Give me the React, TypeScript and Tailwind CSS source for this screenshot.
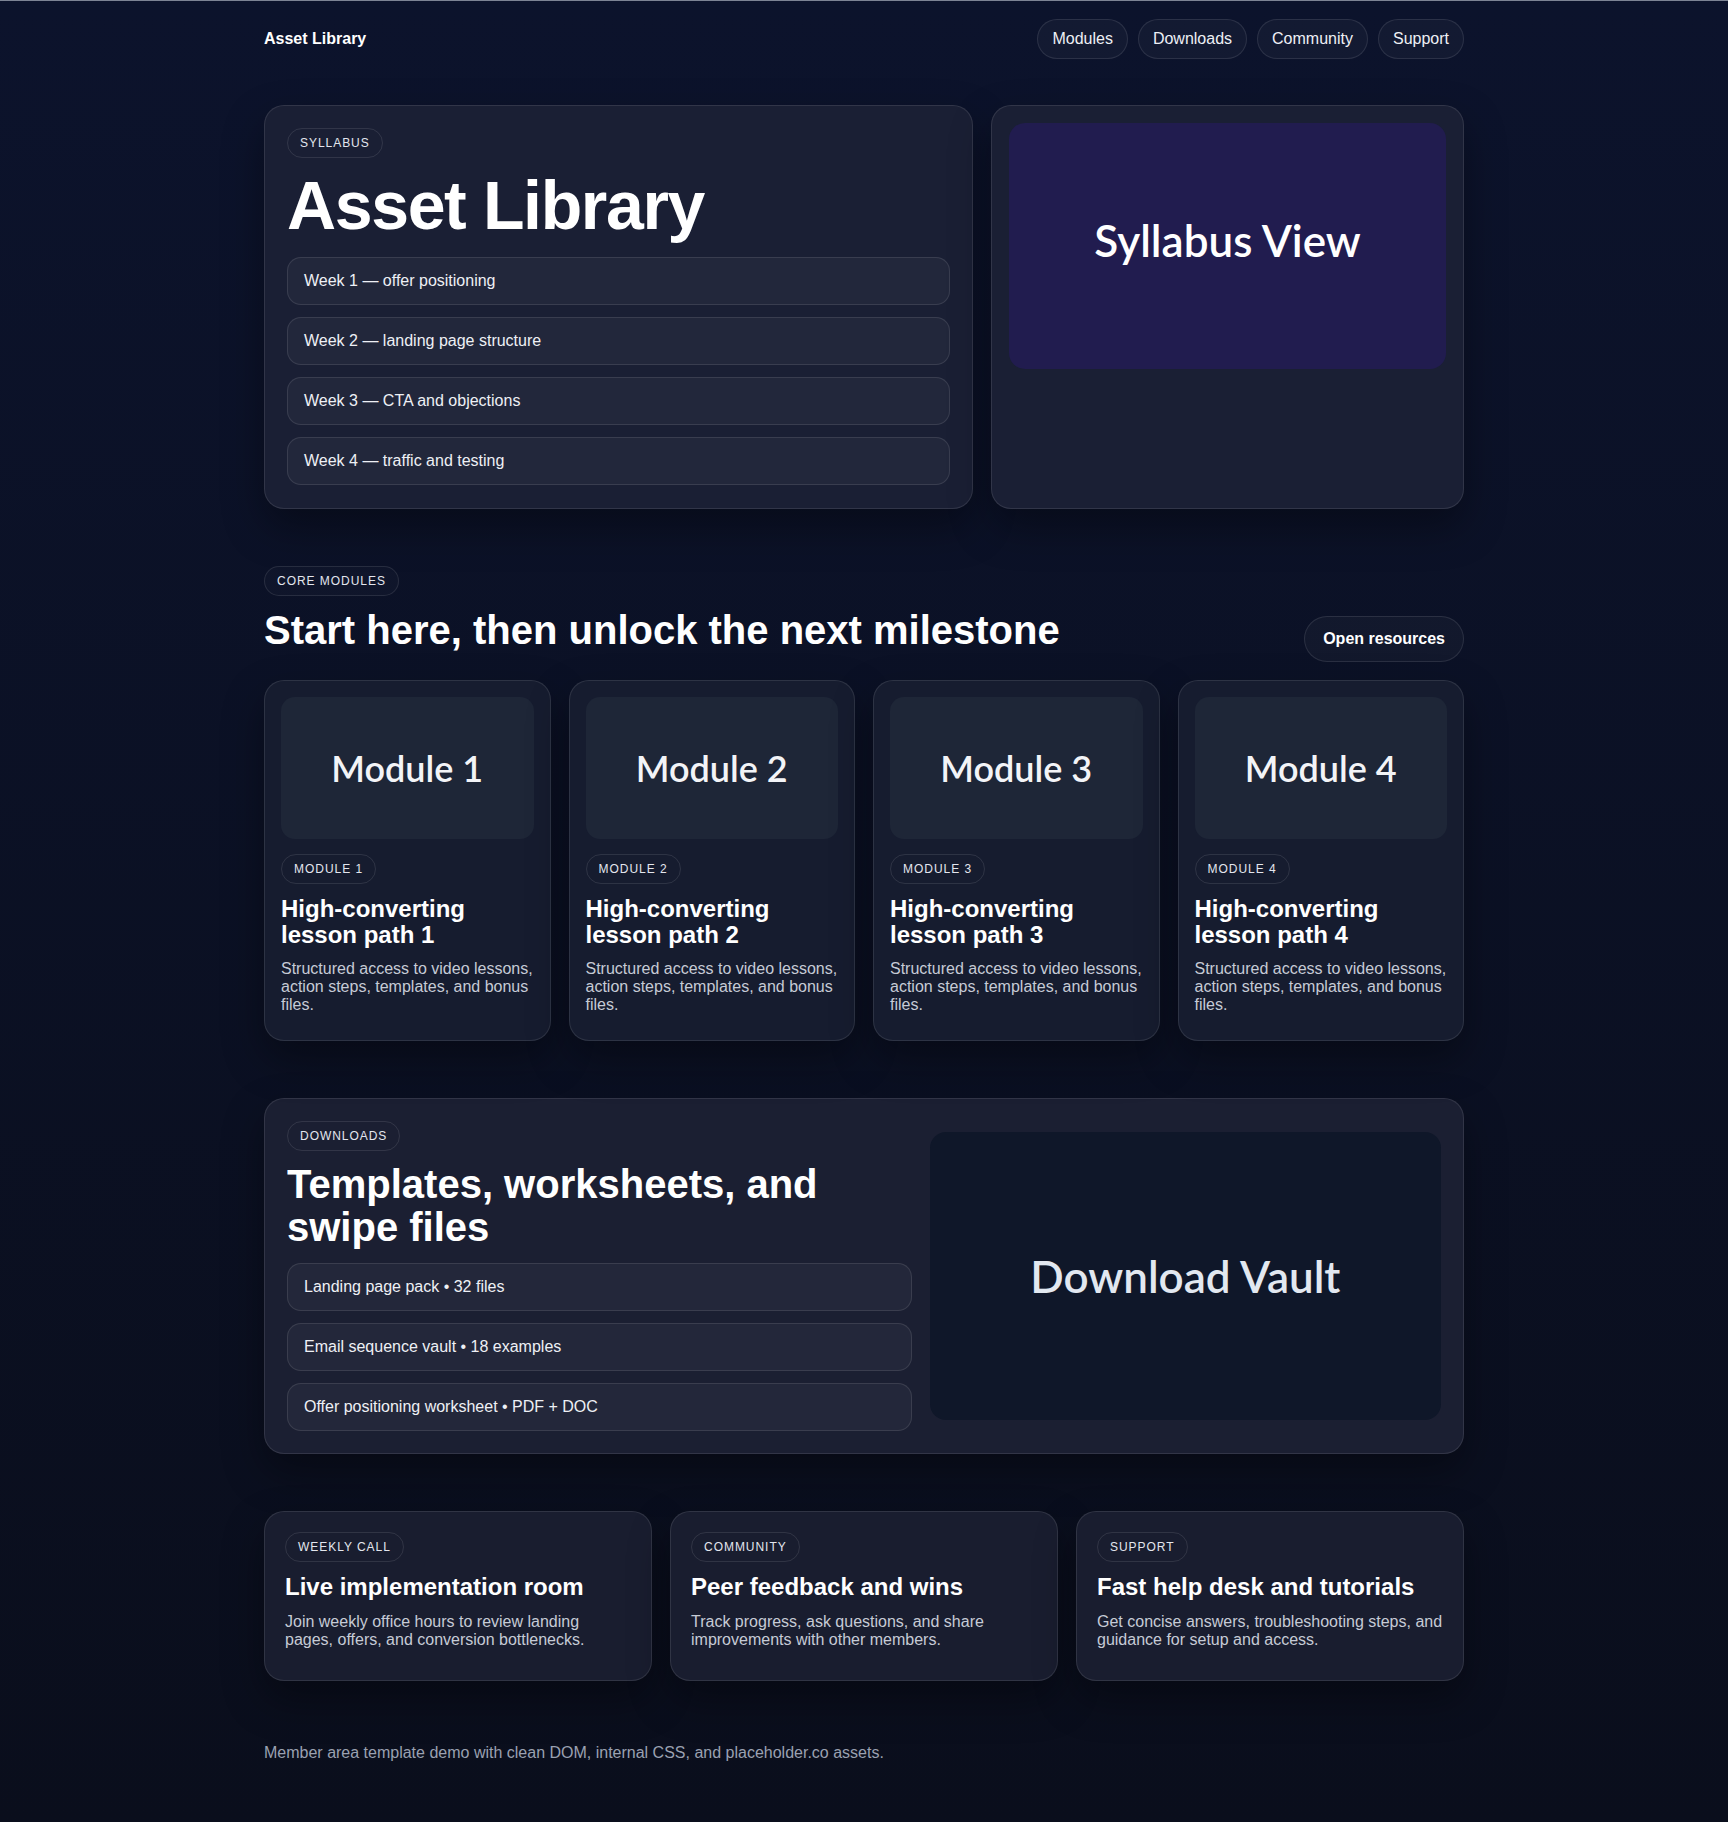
import React from 'react';

const navLinks = ['Modules', 'Downloads', 'Community', 'Support'];

const weeks = [
  'Week 1 — offer positioning',
  'Week 2 — landing page structure',
  'Week 3 — CTA and objections',
  'Week 4 — traffic and testing',
];

const files = [
  'Landing page pack • 32 files',
  'Email sequence vault • 18 examples',
  'Offer positioning worksheet • PDF + DOC',
];

const extras = [
  {
    tag: 'Weekly call',
    title: 'Live implementation room',
    text: 'Join weekly office hours to review landing pages, offers, and conversion bottlenecks.',
  },
  {
    tag: 'Community',
    title: 'Peer feedback and wins',
    text: 'Track progress, ask questions, and share improvements with other members.',
  },
  {
    tag: 'Support',
    title: 'Fast help desk and tutorials',
    text: 'Get concise answers, troubleshooting steps, and guidance for setup and access.',
  },
];

const Tag: React.FC<{ children: React.ReactNode; className?: string }> = ({ children, className = '' }) => (
  <span
    className={`self-start rounded-full border border-white/10 px-3 py-[5px] text-[12px] leading-[18px] uppercase tracking-[0.08em] text-[#e3e6ee] ${className}`}
  >
    {children}
  </span>
);

const Row: React.FC<{ children: React.ReactNode }> = ({ children }) => (
  <div className="rounded-[14px] border border-white/10 bg-white/[0.04] px-4 py-[11px] text-base leading-6 text-[#eef0f5]">
    {children}
  </div>
);

const card = 'rounded-[20px] border border-white/10 bg-[#1a1f34] shadow-[0_18px_40px_rgba(0,0,0,0.35)]';

export default function App() {
  return (
    <div className="min-h-screen border-t border-[#7d8494] bg-linear-to-b from-[#0c132c] to-[#0a0e1c] font-['Liberation_Sans',Arial,sans-serif] text-white">
      <div className="mx-auto w-[1200px]">
        <header className="mt-[18px] flex h-10 items-center justify-between">
          <span className="text-base font-bold">Asset Library</span>
          <nav className="flex gap-2.5">
            {navLinks.map((l) => (
              <a
                key={l}
                className="rounded-full border border-white/10 bg-white/[0.03] px-[14px] py-[7px] text-base leading-6 text-[#eef0f5]"
              >
                {l}
              </a>
            ))}
          </nav>
        </header>

        <section className="mt-[46px] grid grid-cols-[1.5fr_1fr] gap-[18px]">
          <div className={`${card} flex flex-col p-[22px] pb-[23px]`}>
            <Tag>Syllabus</Tag>
            <h1 className="mt-3 mb-4 text-[68px] font-bold leading-[1.05] tracking-[-0.02em]">Asset Library</h1>
            <div className="flex flex-col gap-3">
              {weeks.map((w) => (
                <Row key={w}>{w}</Row>
              ))}
            </div>
          </div>
          <div className={`${card} p-[17px]`}>
            <div className="flex aspect-video items-center justify-center rounded-[16px] bg-[#211c4f]">
              <span className="mb-[11px] font-['Lato',sans-serif] text-[44px] font-semibold text-white">Syllabus View</span>
            </div>
          </div>
        </section>

        <section className="mt-[57px]">
          <div className="flex items-end justify-between">
            <div className="flex flex-col">
              <Tag className="bg-white/[0.02]">Core modules</Tag>
              <h2 className="mt-3 mb-2 text-[40px] font-bold leading-[1.1]">
                Start here, then unlock the next milestone
              </h2>
            </div>
            <button className="mb-[-2px] rounded-full border border-white/10 bg-white/[0.03] px-[18px] py-2.5 text-base font-bold leading-6">
              Open resources
            </button>
          </div>
          <div className="mt-5 grid grid-cols-4 gap-[18px]">
            {[1, 2, 3, 4].map((n) => (
              <div key={n} className="flex flex-col rounded-[20px] border border-white/10 bg-[#161c2f] p-4 pb-[26px] shadow-[0_18px_40px_rgba(0,0,0,0.35)]">
                <div className="flex aspect-video items-center justify-center rounded-[14px] bg-[#1e2637]">
                  <span className="font-['Lato',sans-serif] text-[36px] font-semibold text-[#f3f4f7]">Module {n}</span>
                </div>
                <div className="mt-[15px] flex flex-col gap-3">
                  <Tag>Module {n}</Tag>
                  <h3 className="text-2xl font-bold leading-[1.07]">High-converting lesson path {n}</h3>
                  <p className="text-base leading-[1.125] text-[#c6cbd6]">
                    Structured access to video lessons, action steps, templates, and bonus files.
                  </p>
                </div>
              </div>
            ))}
          </div>
        </section>

        <section className={`${card} mt-[57px] grid grid-cols-[1.1fr_0.9fr] items-center gap-[18px] bg-[#1b1f32] p-[22px]`}>
          <div className="flex flex-col">
            <Tag>Downloads</Tag>
            <h2 className="mt-3 text-[40px] font-bold leading-[1.07]">Templates, worksheets, and swipe files</h2>
            <div className="mt-[15px] flex flex-col gap-3">
              {files.map((f) => (
                <Row key={f}>{f}</Row>
              ))}
            </div>
          </div>
          <div className="flex aspect-video items-center justify-center rounded-[16px] bg-[#0f1729]">
            <span className="font-['Lato',sans-serif] text-[44px] font-semibold text-[#e2e8f0]">Download Vault</span>
          </div>
        </section>

        <section className="mt-[57px] grid grid-cols-3 gap-[18px]">
          {extras.map((e) => (
            <div key={e.tag} className="flex flex-col gap-3 rounded-[20px] border border-white/10 bg-[#191d2f] p-5 pb-[31px] shadow-[0_18px_40px_rgba(0,0,0,0.35)]">
              <Tag>{e.tag}</Tag>
              <h3 className="text-2xl font-bold leading-[1.1]">{e.title}</h3>
              <p className="text-base leading-[1.125] text-[#c6cbd6]">{e.text}</p>
            </div>
          ))}
        </section>

        <footer className="mt-[60px] pb-[59px] text-base leading-6 text-[#9aa1b1]">
          Member area template demo with clean DOM, internal CSS, and placeholder.co assets.
        </footer>
      </div>
    </div>
  );
}
